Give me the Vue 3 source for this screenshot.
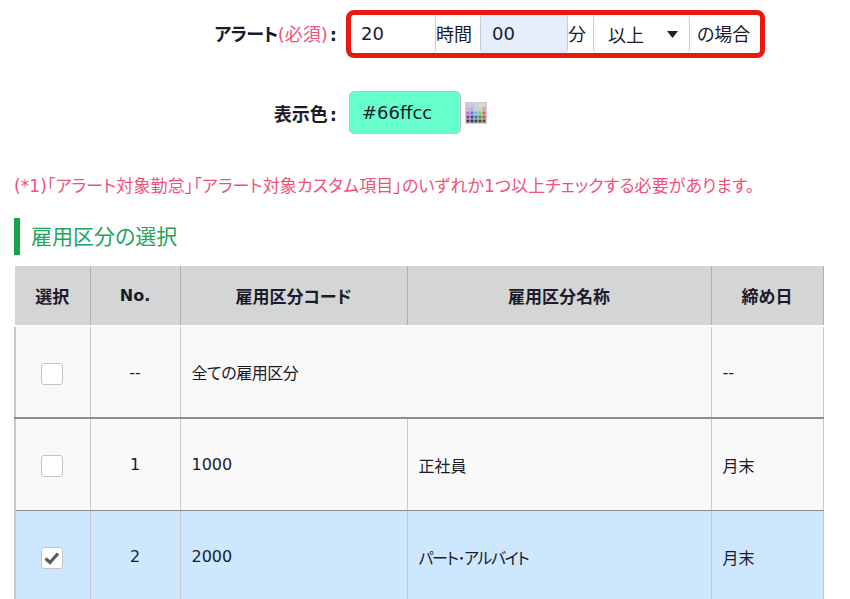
<script setup>
const alertFields = [
  { kind: 'input', text: '20', cls: 'w-hour' },
  { kind: 'unit', text: '時間', cls: 'u-hour' },
  { kind: 'input', text: '00', cls: 'w-min focus' },
  { kind: 'unit', text: '分', cls: 'u-min' },
]
const palette = [
  ['#dcbcf0', '#ccc4f0', '#c8dcf0', '#d4ecc8', '#ecd0d6'],
  ['#e8a0ec', '#b4acec', '#a8e4ec', '#b4eca4', '#ec9c9c'],
  ['#c860d8', '#7070e0', '#50c8dc', '#78d860', '#e06060'],
  ['#7a3c90', '#3c3ca0', '#2c8090', '#4c9040', '#a06830'],
  ['#4c3444', '#343454', '#344c4c', '#3c4c34', '#5c4430'],
]
const rows = [
  { no: '--', code: '全ての雇用区分', name: '', close: '--', span: true, thick: true },
  { no: '1', code: '1000', name: '正社員', close: '月末' },
  { no: '2', code: '2000', name: 'パート･アルバイト', close: '月末', checked: true },
]
</script>

<template>
  <main class="page">
    <div class="form-row alert-row">
      <label class="label"><span class="kana">アラート</span><span class="req">(必須)</span><span class="colon">:</span></label>
      <div class="alert-box">
        <template v-for="f in alertFields" :key="f.text">
          <div v-if="f.kind === 'input'" class="field" :class="f.cls">{{ f.text }}</div>
          <span v-else class="unit" :class="f.cls">{{ f.text }}</span>
        </template>
        <div class="field select">
          <span>以上</span>
          <svg class="caret" width="11" height="7" viewBox="0 0 11 7"><path d="M0 0h11L5.5 7z" fill="#222" /></svg>
        </div>
        <span class="unit u-case">の場合</span>
      </div>
    </div>

    <div class="form-row color-row">
      <label class="label">表示色<span class="colon">:</span></label>
      <div class="color-input">#66ffcc</div>
      <svg class="palette" width="22" height="22" viewBox="0 0 22 22">
        <rect width="22" height="22" fill="#cfcdd2" />
        <g v-for="(row, y) in palette" :key="y">
          <rect v-for="(c, x) in row" :key="x" :x="1.5 + x * 4" :y="1.5 + y * 4" width="3" height="3" :fill="c" />
        </g>
      </svg>
    </div>

    <p class="note">(*1)「アラート対象勤怠」「アラート対象カスタム項目」のいずれか1つ以上チェックする必要があります。</p>

    <h2 class="section">雇用区分の選択</h2>

    <table class="grid">
      <colgroup>
        <col class="c1" /><col class="c2" /><col class="c3" /><col class="c4" /><col class="c5" />
      </colgroup>
      <thead>
        <tr>
          <th>選択</th><th>No.</th><th>雇用区分コード</th><th>雇用区分名称</th><th>締め日</th>
        </tr>
      </thead>
      <tbody>
        <tr v-for="r in rows" :key="r.no" :class="{ checked: r.checked, thick: r.thick }">
          <td class="center pick">
            <span class="check">
              <svg v-if="r.checked" class="tick" width="16" height="14" viewBox="0 0 16 14"><path d="M1.5 7.5 6 11.5l8-9" fill="none" stroke="#5a5a5a" stroke-width="3.2" /></svg>
            </span>
          </td>
          <td class="center">{{ r.no }}</td>
          <td :colspan="r.span ? 2 : 1" :class="{ 'tight-s': r.span }">{{ r.code }}</td>
          <td v-if="!r.span" :class="{ tight: r.checked }">{{ r.name }}</td>
          <td>{{ r.close }}</td>
        </tr>
      </tbody>
    </table>
  </main>
</template>

<style>
html, body { margin: 0; background: #fff; overflow: hidden; }
</style>

<style scoped>
.page {
  width: 850px;
  height: 599px;
  overflow: hidden;
  box-sizing: border-box;
  padding: 10px 26px 0 14px;
  font-family: "DejaVu Sans", "Noto Sans CJK JP", sans-serif;
  font-feature-settings: "palt";
  color: #1b1b2b;
}
.form-row { display: flex; align-items: center; }
.label {
  width: 323px;
  text-align: right;
  font-size: 18px;
  font-weight: 700;
  flex: none;
}
.alert-row .label { padding-bottom: 3px; box-sizing: border-box; }
.kana { letter-spacing: -0.6px; }
.colon { margin-left: 2px; }
.req { color: #f0527a; font-weight: 400; }
.alert-box {
  margin-left: 9px;
  width: 419px;
  height: 48px;
  box-sizing: border-box;
  border: 5px solid #e8190e;
  border-radius: 8px;
  display: flex;
  font-size: 18px;
}
.field {
  box-sizing: border-box;
  height: 38px;
  display: flex;
  align-items: center;
  border: 1px solid #ccc;
  border-width: 0 1px 0 0;
  border-radius: 4px;
  padding-left: 10px;
  padding-bottom: 2px;
}
.w-hour { width: 85px; }
.w-min { width: 88px; background: #e6eefb; border-width: 0 1px 0 1px; padding-left: 11px; }
.unit { display: flex; align-items: center; flex: none; padding-bottom: 2px; box-sizing: border-box; white-space: nowrap; }
.u-hour { width: 44px; }
.u-min { width: 25px; }
.select { width: 97px; border-width: 0 1px 0 1px; padding: 0 11px 0 14px; justify-content: space-between; }
.u-case { width: 60px; padding-left: 7px; }
.color-row { margin-top: 33px; height: 43px; }
.color-input {
  margin-left: 12px;
  width: 112px;
  height: 43px;
  box-sizing: border-box;
  padding-left: 12px;
  display: flex;
  align-items: center;
  background: #66ffcc;
  border: 1px solid #c4c4c4;
  border-radius: 5px;
  font-size: 18px;
}
.palette { margin-left: 4px; }
.note {
  margin: 38px 0 0;
  font-size: 17px;
  letter-spacing: 0.1px;
  line-height: 28px;
  color: #f0527a;
  white-space: nowrap;
}
.section {
  margin: 18px 0 0;
  height: 37px;
  line-height: 39px;
  border-left: 6px solid #17a34a;
  padding-left: 11px;
  font-size: 21px;
  font-weight: 400;
  color: #24a35a;
}
.grid {
  margin-top: 11px;
  width: 808px;
  table-layout: fixed;
  border-collapse: collapse;
  font-size: 16px;
}
.c1 { width: 75px; }
.c2 { width: 90px; }
.c3 { width: 227px; }
.c4 { width: 304px; }
.c5 { width: 112px; }
th {
  height: 59px;
  padding: 0;
  background: #d4d6d6;
  font-size: 17px;
  font-weight: 700;
  border-right: 1px solid #aeb0b0;
  border-bottom: 2px solid #fff;
}
th:nth-child(2) { font-size: 16px; }
td {
  height: 91px;
  padding: 0 11px;
  background: #f9f9f9;
  border: 1px solid #c8c8c8;
  border-bottom-color: #8c8c8c;
}
td:first-child { border-left: 2px solid #c8c8c8; }
tr.thick td { height: 90px; border-bottom: 2px solid #8c8c8c; }
tr.checked td { background: #cde8fe; }
.center { text-align: center; }
td.pick { padding: 0 13px 0 11px; }
.tight { letter-spacing: -1.4px; }
.tight-s { letter-spacing: -0.5px; }
.check {
  display: inline-flex;
  align-items: center;
  justify-content: center;
  vertical-align: middle;
  margin-top: 3px;
  width: 22px;
  height: 22px;
  box-sizing: border-box;
  background: #fff;
  border: 1px solid #c4c4c4;
  border-radius: 3px;
}
.tick { filter: blur(0.6px); }
</style>
